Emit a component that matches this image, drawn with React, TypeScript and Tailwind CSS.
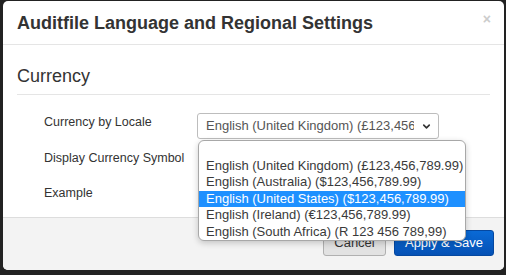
import { ChevronDown } from "lucide-react";

const OPTIONS = [
  "",
  "English (United Kingdom) (£123,456,789.99)",
  "English (Australia) ($123,456,789.99)",
  "English (United States) ($123,456,789.99)",
  "English (Ireland) (€123,456,789.99)",
  "English (South Africa) (R 123 456 789,99)",
];

const SELECTED = 3;

export default function App() {
  return (
    <div
      className="w-[506px] h-[275px] overflow-hidden bg-[#222222] pl-[3px] pt-[1px]"
      style={{ fontFamily: '"Liberation Sans", Arial, sans-serif' }}
    >
      <div className="w-[501px] h-[269px] rounded-[5px] bg-white flex flex-col">
        {/* Header */}
        <div className="relative h-[44px] border-b border-[#e5e5e5] px-[14px] pt-[12px] shrink-0">
          <h4 className="text-[18px] leading-[20px] font-bold text-[#333]">
            Auditfile Language and Regional Settings
          </h4>
          <span className="absolute right-[13px] top-[9px] text-[14px] leading-[18px] text-[#cccccc] font-bold">
            ×
          </span>
        </div>

        {/* Body */}
        <div className="px-[14px] flex-1">
          <div className="mt-[21px] pb-[8px] border-b border-[#e5e5e5] text-[18px] leading-[20px] text-[#333]">
            Currency
          </div>

          <div className="pl-[27px] pt-[18px] text-[12.5px] leading-[18px] text-[#333]">
            <div className="flex h-[36px]">
              <div className="w-[153px]">Currency by Locale</div>
              <div className="relative">
                <div className="w-[242px] h-[26px] border border-[#bdbdbd] rounded-[3px] bg-white flex items-center pl-[8px] pr-[6px]">
                  <span className="flex-1 overflow-hidden whitespace-nowrap text-[13px] text-[#555]">
                    English (United Kingdom) (£123,456,789.99)
                  </span>
                  <ChevronDown className="w-[11px] h-[11px] ml-[7px] text-[#333]" strokeWidth={3.5} />
                </div>

                {/* Open list */}
                <div className="absolute left-[1px] top-[27px] w-[268px] rounded-[6px] border border-[#a8a8a8] bg-white shadow-[0_2px_6px_rgba(0,0,0,0.2)] overflow-hidden z-10">
                  {OPTIONS.map((o, i) => (
                    <div
                      key={i}
                      className={`h-[16.5px] leading-[16.5px] pl-[7px] text-[13px] whitespace-nowrap ${
                        i === SELECTED ? "bg-[#1e90ff] text-white" : "text-[#3a3a3a]"
                      }`}
                    >
                      {o}
                    </div>
                  ))}
                </div>
              </div>
            </div>
            <div className="h-[35px]">Display Currency Symbol</div>
            <div className="h-[33px]">Example</div>
          </div>
        </div>

        {/* Footer */}
        <div className="h-[53px] shrink-0 border-t border-[#dddddd] bg-[#f3f3f3] rounded-b-[5px] flex justify-end items-start pt-[12px] pr-[10px] gap-[8px]">
          <button className="w-[63px] h-[26px] rounded-[3px] border border-[#b0b0b0] bg-[#e2e2e2] text-[13px] text-[#333]">
            Cancel
          </button>
          <button className="w-[100px] h-[26px] rounded-[3px] border border-[#0548a0] bg-gradient-to-b from-[#0a6ad6] to-[#0551b5] text-[13px] text-white">
            Apply &amp; Save
          </button>
        </div>
      </div>
    </div>
  );
}
